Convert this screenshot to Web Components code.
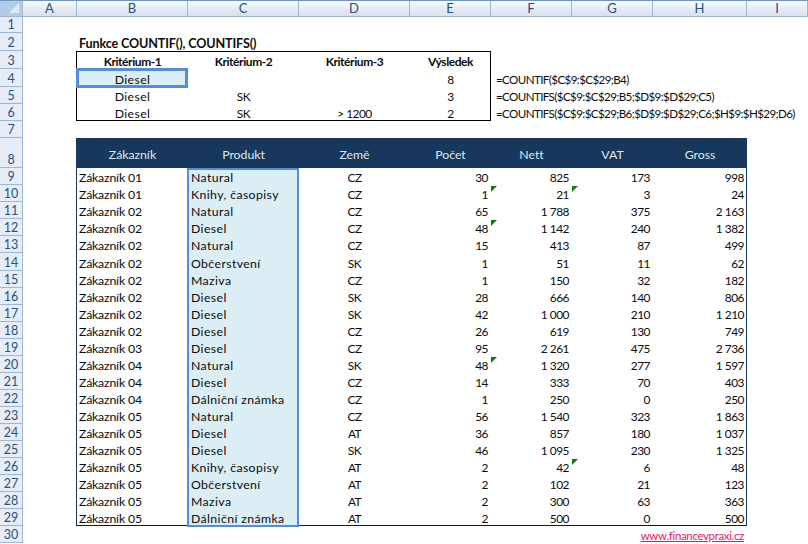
<!DOCTYPE html>
<html lang="cs"><head><meta charset="utf-8"><title>COUNTIF</title>
<style>html,body{margin:0;background:#fff;overflow:hidden}</style></head>
<body><xl-sheet></xl-sheet>
<script>
const COLS=[['A',54],['B',111],['C',111],['D',111],['E',81],['F',81],['G',81],['H',94],['I',61]];
const ROWH=[16,18,18,18,17,17,17,30,17,17,17,17,17,18,17,17,17,17,17,17,17,17,17,17,17,17,17,17,17,17];
const RAW=`Zákazník 01|Natural|CZ|30|825|173|998|
Zákazník 01|Knihy, časopisy|CZ|1|21|3|24|FG
Zákazník 02|Natural|CZ|65|1 788|375|2 163|
Zákazník 02|Diesel|CZ|48|1 142|240|1 382|F
Zákazník 02|Natural|CZ|15|413|87|499|
Zákazník 02|Občerstvení|SK|1|51|11|62|
Zákazník 02|Maziva|CZ|1|150|32|182|
Zákazník 02|Diesel|SK|28|666|140|806|
Zákazník 02|Diesel|SK|42|1 000|210|1 210|
Zákazník 02|Diesel|CZ|26|619|130|749|
Zákazník 03|Diesel|CZ|95|2 261|475|2 736|
Zákazník 04|Natural|SK|48|1 320|277|1 597|F
Zákazník 04|Diesel|CZ|14|333|70|403|
Zákazník 04|Dálniční známka|CZ|1|250|0|250|
Zákazník 05|Natural|CZ|56|1 540|323|1 863|
Zákazník 05|Diesel|AT|36|857|180|1 037|
Zákazník 05|Diesel|SK|46|1 095|230|1 325|
Zákazník 05|Knihy, časopisy|AT|2|42|6|48|G
Zákazník 05|Občerstvení|AT|2|102|21|123|
Zákazník 05|Maziva|AT|2|300|63|363|
Zákazník 05|Dálniční známka|AT|2|500|0|500|`.split('\n').map(l=>l.split('|'));

class XlHead extends HTMLElement{constructor(){super();this.attachShadow({mode:'open'}).innerHTML=`<style>
:host{display:flex;align-items:center;justify-content:center;box-sizing:border-box;min-width:0;
font:13px/1 Lato,"Liberation Sans",sans-serif;color:#2d5177;
background:linear-gradient(#f8fafd,#e9eef6 45%,#dce4f0);border-right:1px solid #9eb6ce;border-bottom:1px solid #9eb6ce}
:host([top]){border-top:1px solid #6f94bd;background:linear-gradient(#f9fbfe,#e6ecf5 50%,#d7e0ed)}
:host([left]){background:#e6edf7;align-items:flex-end;padding-bottom:1px;font-size:12.5px}
:host([corner]){background:#b2cbe9;align-items:flex-end;justify-content:flex-end;padding:0 3px 3px 0}
</style><slot></slot>`}}
class XlCell extends HTMLElement{constructor(){super();this.attachShadow({mode:'open'}).innerHTML=`<style>
:host{display:flex;align-items:flex-end;box-sizing:border-box;min-width:0;padding:0 2px 0 2px;white-space:nowrap;position:relative;
font:12.3px/15px Lato,"Liberation Sans",sans-serif;letter-spacing:-.04px;color:#0c0c0c}
:host([a=c]){justify-content:center}:host([a=r]){justify-content:flex-end}
:host([b]){font-weight:700}
:host([t=name]){letter-spacing:-.2px}
:host([t=prod]){letter-spacing:.38px}
:host([t=num]){font-size:11.9px;letter-spacing:-.5px}
:host([t=crit]){font-size:12px;letter-spacing:-.42px}
:host([t=title]){font-size:12.6px;letter-spacing:-.14px}
:host([t=formula]){font-size:11.6px;letter-spacing:-.6px;padding-left:5px}
:host([t=th]){color:#dfe8f2;align-items:center;padding-top:2px}
:host([t=link]){color:#e8185c;text-decoration:underline;font-size:11.4px;letter-spacing:-.3px;padding-right:3px}
:host([flag])::before{content:"";position:absolute;top:1px;left:0;width:0;height:0;border-top:6px solid #0a7d0a;border-right:6px solid transparent}
</style><slot></slot>`}}
class XlBox extends HTMLElement{constructor(){super();this.attachShadow({mode:'open'}).innerHTML=`<style>
:host{display:block;box-sizing:border-box;pointer-events:none}
:host([k=crit]){border:1px solid #000;margin-left:-1px}
:host([k=sel]){border:3px solid #558ed5;background:#dbeef4;margin:-1px 0 -1px -1px}
:host([k=range]){border:2px solid #558ed5;background:#dbeef4;margin:0 0 -1px -1px}
:host([k=navy]){background:#17375d;margin-left:-1px}
:host([k=frame]){border:solid #17375d;border-width:0 1px 1px 1px;margin:0 0 0 -1px;border-bottom-color:#101d2c}
</style>`}}
class XlSheet extends HTMLElement{constructor(){super();const s=this.attachShadow({mode:'open'});
s.innerHTML=`<style>:host{display:block;width:808px;height:544px;overflow:hidden}
.g{display:grid;grid-template-columns:23px ${COLS.map(c=>c[1]+'px').join(' ')};grid-template-rows:17px ${ROWH.map(r=>r+'px').join(' ')}}
xl-cell{z-index:2}xl-box{z-index:1}
</style><div class="g"></div>`;
const g=s.querySelector('.g');
const add=(tag,r,c,txt,at={},rs=1,cs=1)=>{const e=document.createElement(tag);e.style.gridArea=`${r}/${c}/span ${rs}/span ${cs}`;
if(txt!=null)e.textContent=txt;for(const k in at)e.setAttribute(k,at[k]);g.append(e);return e};
const corner=add('xl-head',1,1,null,{top:'',corner:''});
corner.innerHTML='<svg width="10" height="10" viewBox="0 0 10 10" style="display:block"><polygon points="10,0 10,10 0,10" fill="#dfe9f5"/></svg>';
COLS.forEach((c,i)=>add('xl-head',1,i+2,c[0],{top:''}));
ROWH.forEach((h,i)=>add('xl-head',i+2,1,i+1,{left:''}));
// grid row = excel row + 1, grid column = excel column + 1 (B = 3)
add('xl-box',9,3,null,{k:'navy'},1,7);
add('xl-box',10,3,null,{k:'frame'},21,7);
add('xl-box',4,3,null,{k:'crit'},4,4);
add('xl-box',5,3,null,{k:'sel'});
add('xl-box',10,4,null,{k:'range'},21,1);
add('xl-cell',3,3,'Funkce COUNTIF(), COUNTIFS()',{b:'',t:'title'},1,3);
['Kritérium-1','Kritérium-2','Kritérium-3','Výsledek'].forEach((t,i)=>add('xl-cell',4,3+i,t,{a:'c',b:'',t:'crit'}));
[['Diesel','','',8,'=COUNTIF($C$9:$C$29;B4)'],['Diesel','SK','',3,'=COUNTIFS($C$9:$C$29;B5;$D$9:$D$29;C5)'],['Diesel','SK','> 1200',2,'=COUNTIFS($C$9:$C$29;B6;$D$9:$D$29;C6;$H$9:$H$29;D6)']].forEach((r,i)=>{
 r.slice(0,4).forEach((t,j)=>{if(t!=='')add('xl-cell',5+i,3+j,t,{a:'c',t:j==0?'prod':'num'})});
 add('xl-cell',5+i,7,r[4],{t:'formula'},1,5);
});
['Zákazník','Produkt','Země','Počet','Nett','VAT','Gross'].forEach((t,i)=>add('xl-cell',9,3+i,t,{a:'c',t:'th'}));
RAW.forEach((r,i)=>{const f=r[7];
 r.slice(0,7).forEach((t,j)=>{const at=j==0?{t:'name'}:j==1?{t:'prod'}:j==2?{a:'c',t:'num'}:{a:'r',t:'num'};
  if(j==4&&f.includes('F'))at.flag='';if(j==5&&f.includes('G'))at.flag='';
  const e=add('xl-cell',10+i,3+j,t,at);
  if(j>=3)e.style.paddingRight='3px';
  if(j==1)e.style.paddingLeft='3px';
 });
});
add('xl-cell',31,7,'www.financevpraxi.cz',{a:'r',t:'link'},1,3);
}}
customElements.define('xl-head',XlHead);customElements.define('xl-cell',XlCell);customElements.define('xl-box',XlBox);customElements.define('xl-sheet',XlSheet);
</script></body></html>
